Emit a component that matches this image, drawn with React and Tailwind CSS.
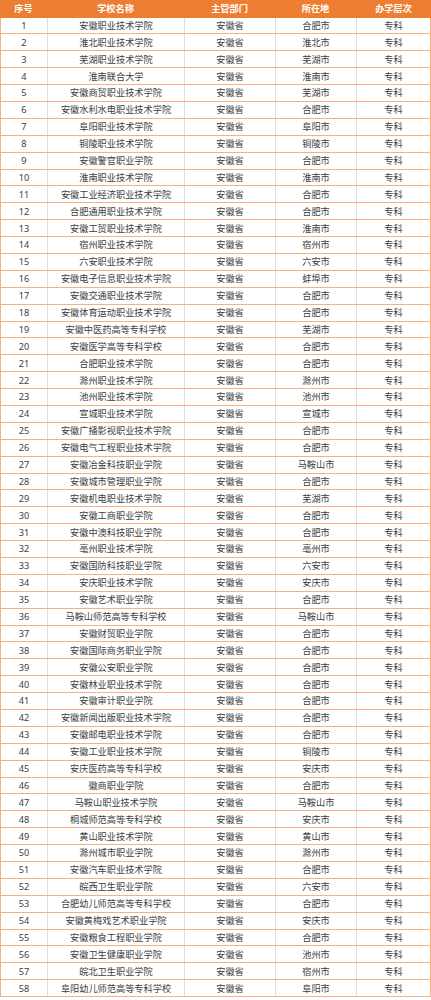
const schools = [
  ["安徽职业技术学院", "合肥市"],
  ["淮北职业技术学院", "淮北市"],
  ["芜湖职业技术学院", "芜湖市"],
  ["淮南联合大学", "淮南市"],
  ["安徽商贸职业技术学院", "芜湖市"],
  ["安徽水利水电职业技术学院", "合肥市"],
  ["阜阳职业技术学院", "阜阳市"],
  ["铜陵职业技术学院", "铜陵市"],
  ["安徽警官职业学院", "合肥市"],
  ["淮南职业技术学院", "淮南市"],
  ["安徽工业经济职业技术学院", "合肥市"],
  ["合肥通用职业技术学院", "合肥市"],
  ["安徽工贸职业技术学院", "淮南市"],
  ["宿州职业技术学院", "宿州市"],
  ["六安职业技术学院", "六安市"],
  ["安徽电子信息职业技术学院", "蚌埠市"],
  ["安徽交通职业技术学院", "合肥市"],
  ["安徽体育运动职业技术学院", "合肥市"],
  ["安徽中医药高等专科学校", "芜湖市"],
  ["安徽医学高等专科学校", "合肥市"],
  ["合肥职业技术学院", "合肥市"],
  ["滁州职业技术学院", "滁州市"],
  ["池州职业技术学院", "池州市"],
  ["宣城职业技术学院", "宣城市"],
  ["安徽广播影视职业技术学院", "合肥市"],
  ["安徽电气工程职业技术学院", "合肥市"],
  ["安徽冶金科技职业学院", "马鞍山市"],
  ["安徽城市管理职业学院", "合肥市"],
  ["安徽机电职业技术学院", "芜湖市"],
  ["安徽工商职业学院", "合肥市"],
  ["安徽中澳科技职业学院", "合肥市"],
  ["亳州职业技术学院", "亳州市"],
  ["安徽国防科技职业学院", "六安市"],
  ["安庆职业技术学院", "安庆市"],
  ["安徽艺术职业学院", "合肥市"],
  ["马鞍山师范高等专科学校", "马鞍山市"],
  ["安徽财贸职业学院", "合肥市"],
  ["安徽国际商务职业学院", "合肥市"],
  ["安徽公安职业学院", "合肥市"],
  ["安徽林业职业技术学院", "合肥市"],
  ["安徽审计职业学院", "合肥市"],
  ["安徽新闻出版职业技术学院", "合肥市"],
  ["安徽邮电职业技术学院", "合肥市"],
  ["安徽工业职业技术学院", "铜陵市"],
  ["安庆医药高等专科学校", "安庆市"],
  ["徽商职业学院", "合肥市"],
  ["马鞍山职业技术学院", "马鞍山市"],
  ["桐城师范高等专科学校", "安庆市"],
  ["黄山职业技术学院", "黄山市"],
  ["滁州城市职业学院", "滁州市"],
  ["安徽汽车职业技术学院", "合肥市"],
  ["皖西卫生职业学院", "六安市"],
  ["合肥幼儿师范高等专科学校", "合肥市"],
  ["安徽黄梅戏艺术职业学院", "安庆市"],
  ["安徽粮食工程职业学院", "合肥市"],
  ["安徽卫生健康职业学院", "池州市"],
  ["皖北卫生职业学院", "宿州市"],
  ["阜阳幼儿师范高等专科学校", "阜阳市"],
];

const cols = "grid grid-cols-[47px_137px_91px_81px_1fr]";

export default function App() {
  return (
    <div className="w-[431px] bg-white font-['Noto_Sans','Noto_Sans_CJK_SC',sans-serif] text-[9.2px] leading-none">
      {/* header */}
      <div className={`${cols} h-[17.5px] bg-[#ed7d31] font-bold text-white`}>
        <div className="flex items-center justify-center">序号</div>
        <div className="flex items-center justify-center">学校名称</div>
        <div className="flex items-center justify-center">主管部门</div>
        <div className="flex items-center justify-center">所在地</div>
        <div className="flex items-center justify-center">办学层次</div>
      </div>

      <div className="border-x border-[#f4b183] text-[#3d3d3d]">
        {schools.map(([name, city], i) => (
          <div
            key={i}
            className={`${cols} h-[16.9px] border-b border-[#f4b183]`}
          >
            <div className="flex items-center justify-center border-r border-[#dcdcea]">{i + 1}</div>
            <div className="flex items-center justify-center border-r border-[#dcdcea]">{name}</div>
            <div className="flex items-center justify-center border-r border-[#dcdcea]">安徽省</div>
            <div className="flex items-center justify-center border-r border-[#dcdcea]">{city}</div>
            <div className="flex items-center justify-center">专科</div>
          </div>
        ))}
      </div>
    </div>
  );
}
